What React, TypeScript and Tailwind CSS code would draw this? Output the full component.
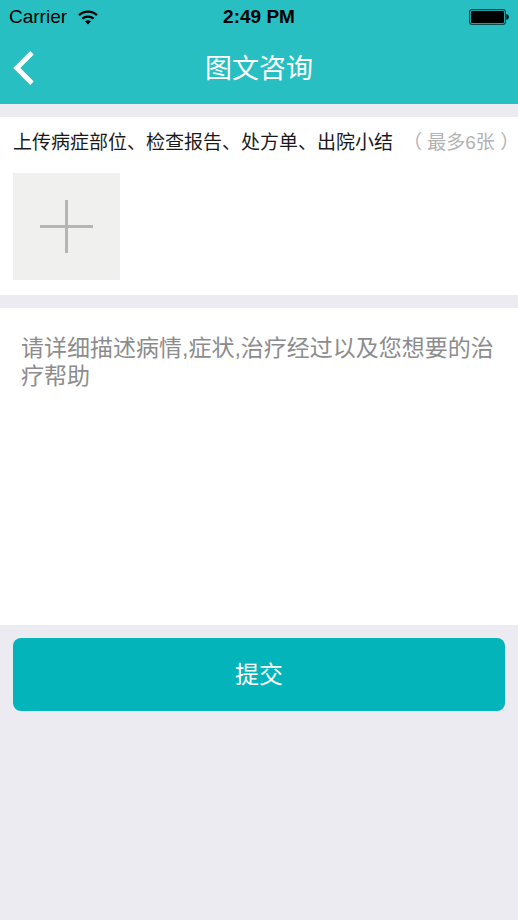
function WifiIcon() {
  return (
    <svg width="20" height="15" viewBox="0 0 20 15" fill="none" aria-hidden="true">
      <path d="M1 5.2C6 .4 14 .4 19 5.2" stroke="#000" strokeWidth="2.4" />
      <path d="M4.3 8.7C7.5 5.8 12.5 5.8 15.7 8.7" stroke="#000" strokeWidth="2.3" />
      <path d="M7 11.3C8.7 9.8 11.3 9.8 13 11.3L10 14.4Z" fill="#000" />
    </svg>
  );
}

function BatteryIcon() {
  return (
    <svg width="40" height="16" viewBox="0 0 40 16" fill="none" aria-hidden="true">
      <rect x="0.6" y="0.6" width="35.8" height="14.8" rx="2.4" stroke="#0b4a4b" strokeWidth="1.2" />
      <rect x="2" y="2" width="33" height="12" rx="1" fill="#000" />
      <path d="M37.4 5C39 5.4 39.8 6.6 39.8 8S39 10.6 37.4 11Z" fill="#000" />
    </svg>
  );
}

function StatusBar() {
  return (
    <div className="grid grid-cols-3 items-center h-[34px] px-[9px] text-black text-[19px] leading-8">
      <div className="flex items-center gap-[11px]">
        <span>Carrier</span>
        <WifiIcon />
      </div>
      <span className="text-center font-bold">2:49 PM</span>
      <div className="flex justify-end">
        <BatteryIcon />
      </div>
    </div>
  );
}

function Header() {
  return (
    <header className="bg-[#27bfc2]">
      <StatusBar />
      <div className="grid grid-cols-[48px_1fr_48px] items-center h-[70px]">
        <button type="button" aria-label="返回" className="flex items-center pl-[13px] h-full">
          <svg width="22" height="36" viewBox="0 0 22 36" fill="none" aria-hidden="true">
            <path d="M19 1.8L3.8 17L19 32.2" stroke="#fff" strokeWidth="5" />
          </svg>
        </button>
        <h1 className="text-center text-white text-[27px] leading-8">图文咨询</h1>
      </div>
    </header>
  );
}

function UploadSection() {
  return (
    <section className="bg-white pt-3 pb-[15px] pl-[13px]">
      <div className="flex gap-[10px] text-[19px] leading-7 whitespace-nowrap">
        <h2 className="text-[#1a1a1a]">上传病症部位、检查报告、处方单、出院小结</h2>
        <span className="text-[#b2b2b2]">（ 最多6张 ）</span>
      </div>
      <button
        type="button"
        aria-label="添加图片"
        className="mt-4 flex items-center justify-center size-[107px] bg-[#f0f0ef]"
      >
        <svg width="53" height="53" viewBox="0 0 53 53" fill="none" aria-hidden="true">
          <path d="M26.5 0V53M0 26.5H53" stroke="#b5b5b5" strokeWidth="3" />
        </svg>
      </button>
    </section>
  );
}

export default function App() {
  return (
    <div className="min-h-screen overflow-x-hidden bg-[#ebebf1] font-['Liberation_Sans','Noto_Sans_CJK_SC',sans-serif]">
      <Header />
      <form className="pt-[13px]" onSubmit={(e) => e.preventDefault()}>
        <UploadSection />
        <textarea
          aria-label="病情描述"
          rows={10}
          placeholder="请详细描述病情,症状,治疗经过以及您想要的治疗帮助"
          className="mt-[13px] block w-full resize-none border-0 bg-white px-[21px] pt-[26px] pb-[11px] text-[23px] leading-7 text-[#333] placeholder:text-[#8c8c8c] outline-none"
        />
        <div className="p-[13px]">
          <button
            type="submit"
            className="w-full h-[73px] rounded-lg bg-[#03b5ba] text-white text-2xl"
          >
            提交
          </button>
        </div>
      </form>
    </div>
  );
}
